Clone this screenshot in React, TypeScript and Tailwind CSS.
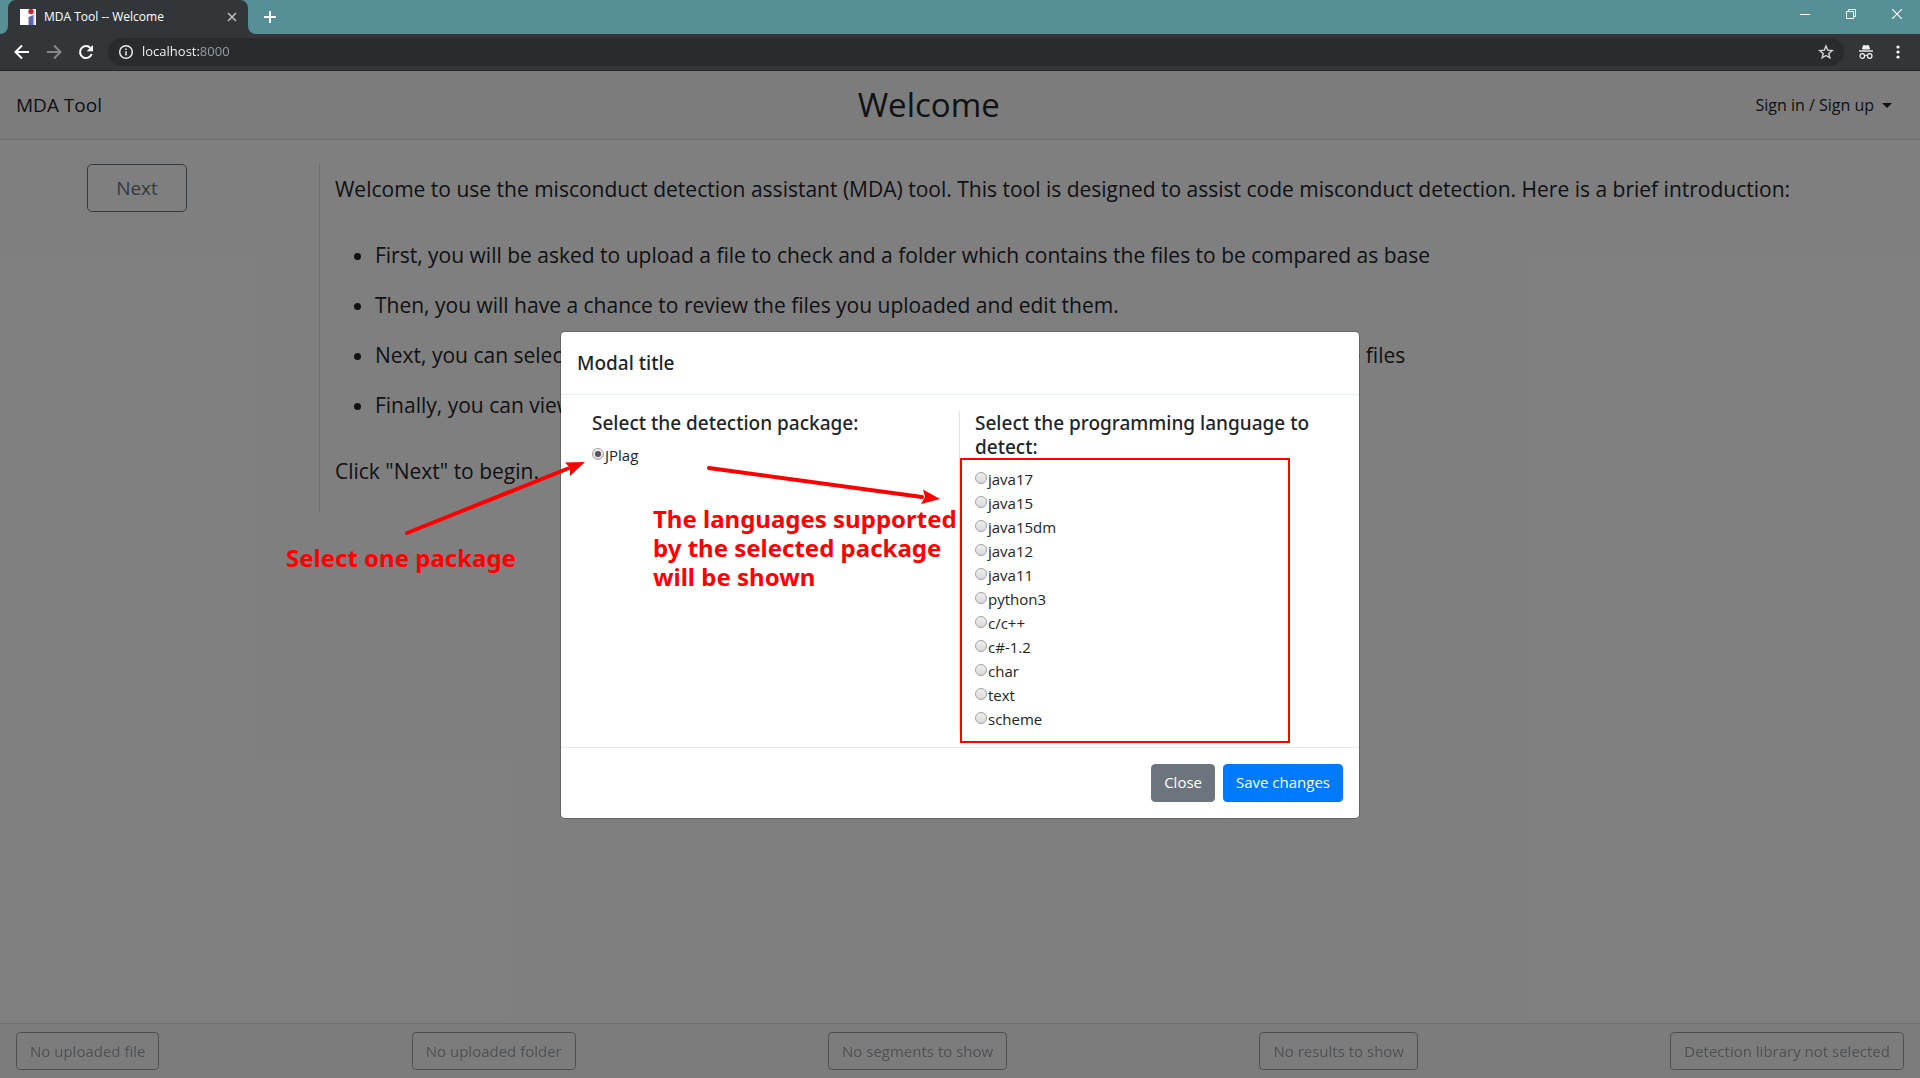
import React, { useState } from "react";

const languages = [
  "java17",
  "java15",
  "java15dm",
  "java12",
  "java11",
  "python3",
  "c/c++",
  "c#-1.2",
  "char",
  "text",
  "scheme",
];

const statuses = [
  "No uploaded file",
  "No uploaded folder",
  "No segments to show",
  "No results to show",
  "Detection library not selected",
];

function Favicon() {
  return (
    <svg width="16" height="16" viewBox="0 0 16 16" aria-hidden="true">
      <rect width="16" height="16" fill="#fff" />
      <circle cx="11" cy="2.5" r="2.7" fill="#cf2027" />
      <path d="M8.5 8 13.5 6V16H8.5Z" fill="#6467a5" />
      <path d="M14 0h1v16h-1z" fill="#d9d9ea" />
    </svg>
  );
}

function TabStrip() {
  return (
    <div className="flex h-[34px] items-stretch bg-[#578f97] text-white">
      <div className="flex w-2 bg-[#323639]">
        <div className="flex-1 rounded-br-lg bg-[#578f97]" />
      </div>
      <div className="flex w-60 items-center rounded-t-lg bg-[#323639] pr-2 pl-3">
        <Favicon />
        <span className="ml-2 flex-1 text-xs">MDA Tool -- Welcome</span>
        <button aria-label="Close tab" className="flex size-4 items-center justify-center">
          <svg width="10" height="10" viewBox="0 0 10 10" stroke="#bfc1c3" strokeWidth="1.5">
            <path d="M1 1 9 9M9 1 1 9" />
          </svg>
        </button>
      </div>
      <div className="flex w-2 bg-[#323639]">
        <div className="flex-1 rounded-bl-lg bg-[#578f97]" />
      </div>
      <button aria-label="New tab" className="flex w-7 items-center justify-center">
        <svg width="12" height="12" viewBox="0 0 12 12" stroke="#fff" strokeWidth="2">
          <path d="M6 0V12M0 6H12" />
        </svg>
      </button>
      <div className="ml-auto flex h-7 items-center">
        <button aria-label="Minimize" className="flex h-7 w-[46px] items-center justify-center">
          <svg width="10" height="10" viewBox="0 0 10 10" stroke="#fff">
            <path d="M0 5.5H10" />
          </svg>
        </button>
        <button aria-label="Restore" className="flex h-7 w-[46px] items-center justify-center">
          <svg width="10" height="10" viewBox="0 0 10 10" fill="none" stroke="#fff">
            <path d="M.5 2.5H7.5V9.5H.5ZM2.5 2.5V.5H9.5V7.5H7.5" />
          </svg>
        </button>
        <button aria-label="Close window" className="flex h-7 w-[46px] items-center justify-center">
          <svg width="10" height="10" viewBox="0 0 10 10" stroke="#fff" strokeWidth="1.1">
            <path d="M0 0 10 10M10 0 0 10" />
          </svg>
        </button>
      </div>
    </div>
  );
}

function Toolbar() {
  return (
    <div className="flex h-[37px] items-center border-b border-[#262626] bg-[#323639] text-white">
      <button aria-label="Back" className="ml-3 flex size-5 items-center justify-center">
        <svg width="20" height="20" viewBox="0 0 20 20" fill="none" stroke="#fff" strokeWidth="2">
          <path d="M17 10H4M10 3.5 3.5 10 10 16.5" />
        </svg>
      </button>
      <button aria-label="Forward" className="ml-3 flex size-5 items-center justify-center">
        <svg width="20" height="20" viewBox="0 0 20 20" fill="none" stroke="#85888a" strokeWidth="2">
          <path d="M3 10H16M10 3.5 16.5 10 10 16.5" />
        </svg>
      </button>
      <button aria-label="Reload" className="ml-3 flex size-5 items-center justify-center">
        <svg width="20" height="20" viewBox="0 0 20 20" fill="none">
          <path d="M14.5 6A6 6 0 1 0 15.7 12" stroke="#fff" strokeWidth="2" />
          <path d="M17 3V9.3H10.7Z" fill="#fff" />
        </svg>
      </button>
      <div className="ml-3 flex h-7 flex-1 items-center rounded-full bg-[#282c2f] px-2.5">
        <svg width="16" height="16" viewBox="0 0 16 16" fill="none" stroke="#e8eaed" strokeWidth="1.5">
          <circle cx="8" cy="8" r="6.3" />
          <path d="M8 7.2V11.5M8 4.5V6" />
        </svg>
        <input
          type="text"
          aria-label="Address"
          defaultValue="localhost:8000"
          className="ml-2 flex-1 bg-[linear-gradient(90deg,#ffffff_57px,#9aa0a6_57px)] bg-clip-text text-[13px] text-transparent outline-none"
        />
        <button aria-label="Bookmark this page">
          <svg width="16" height="16" viewBox="0 0 16 16" fill="none" stroke="#d5d7d9" strokeWidth="1.4">
            <path d="M8 2 9.7 6.1 14.2 6.5 10.8 9.4 11.8 13.8 8 11.5 4.2 13.8 5.2 9.4 1.8 6.5 6.3 6.1Z" />
          </svg>
        </button>
      </div>
      <button aria-label="Incognito" className="ml-3.5">
        <svg width="16" height="16" viewBox="0 0 16 16" fill="none" stroke="#f1f3f4">
          <path d="M4.5 5 5.5 1.5 8 2 10.5 1.5 11.5 5Z" fill="#f1f3f4" />
          <path d="M1 7H15" strokeWidth="1.4" />
          <circle cx="4.3" cy="12" r="2.3" strokeWidth="1.2" />
          <circle cx="11.7" cy="12" r="2.3" strokeWidth="1.2" />
          <path d="M6.6 11.6Q8 10.8 9.4 11.6" />
        </svg>
      </button>
      <button aria-label="Browser menu" className="mr-3.5 ml-4">
        <svg width="16" height="16" viewBox="0 0 16 16" fill="#fff">
          <circle cx="8" cy="3" r="1.6" />
          <circle cx="8" cy="8" r="1.6" />
          <circle cx="8" cy="13" r="1.6" />
        </svg>
      </button>
    </div>
  );
}

type RadioProps = { name: string; label: string; checked: boolean; onSelect: () => void };

function RadioRow({ name, label, checked, onSelect }: RadioProps) {
  return (
    <label className="flex h-6 items-center text-[15px]">
      <input
        type="radio"
        name={name}
        checked={checked}
        onChange={onSelect}
        className="mb-0.5 flex size-3 appearance-none items-center justify-center rounded-full border border-[#a3a3a3] bg-linear-to-b from-[#efefef] to-[#dadada] checked:before:size-1.5 checked:before:rounded-full checked:before:bg-[#555555]"
      />
      <span className="pt-0.5 pl-px">{label}</span>
    </label>
  );
}

function Annotations() {
  return (
    <div className="pointer-events-none absolute inset-0 font-['Noto_Sans',sans-serif] text-2xl leading-[29px] font-bold text-[#ff0000]">
      <p className="absolute top-[212px] left-[-274px] whitespace-nowrap">Select one package</p>
      <p className="absolute top-[173px] left-[93px] whitespace-nowrap">
        The languages supported
        <br />
        by the selected package
        <br />
        will be shown
      </p>
      <div className="absolute top-[127px] left-[400px] h-[285px] w-[330px] border-2 border-[#ff0000]" />
      <svg
        className="absolute top-px left-[-160px]"
        width="560"
        height="220"
        viewBox="0 0 560 220"
        fill="#ff0000"
        aria-hidden="true"
      >
        <path d="M7 201 168 136.500" stroke="#ff0000" strokeWidth="4" strokeLinecap="round" />
        <path d="M185 130 165 130.500 170 136 170 144Z" />
        <path d="M309 136 522 165" stroke="#ff0000" strokeWidth="4" strokeLinecap="round" />
        <path d="M540 167 523 157.500 525 165 521 172Z" />
      </svg>
    </div>
  );
}

function PackageDialog() {
  const [pkg, setPkg] = useState("JPlag");
  const [language, setLanguage] = useState("");
  return (
    <div className="absolute inset-0 flex items-center justify-center bg-black/50">
      <div className="relative w-full max-w-[800px]">
        <div
          role="dialog"
          aria-labelledby="dialog-title"
          className="rounded-[5px] border border-black/20 bg-white bg-clip-padding"
        >
          <div className="border-b border-[#e9ecef] p-4">
            <h5 id="dialog-title" className="font-['Noto_Sans',sans-serif] text-[19px] leading-[30px] font-medium">
              Modal title
            </h5>
          </div>
          <div className="grid grid-cols-2 p-4">
            <section className="px-[15px]">
              <h5 className="mb-2 font-['Noto_Sans',sans-serif] text-[19px] leading-6 font-medium">
                Select the detection package:
              </h5>
              <RadioRow name="package" label="JPlag" checked={pkg === "JPlag"} onSelect={() => setPkg("JPlag")} />
            </section>
            <section className="-ml-px border-l border-[#dee2e6] px-[15px]">
              <h5 className="mb-2 font-['Noto_Sans',sans-serif] text-[19px] leading-6 font-medium">
                Select the programming language to detect:
              </h5>
              {languages.map((item) => (
                <RadioRow
                  key={item}
                  name="language"
                  label={item}
                  checked={language === item}
                  onSelect={() => setLanguage(item)}
                />
              ))}
            </section>
          </div>
          <div className="flex justify-end gap-2 border-t border-[#e9ecef] p-4 text-[15px] text-white">
            <button className="h-[38px] rounded border border-[#6c757d] bg-[#6c757d] px-3">Close</button>
            <button className="h-[38px] rounded border border-[#007bff] bg-[#007bff] px-3">Save changes</button>
          </div>
        </div>
        <Annotations />
      </div>
    </div>
  );
}

export default function App() {
  return (
    <div className="flex min-h-screen flex-col bg-white font-['Open_Sans',sans-serif] text-[#212529]">
      <TabStrip />
      <Toolbar />
      <div className="relative flex flex-1 flex-col">
        <header className="flex h-[69px] items-center justify-between border-b border-[#dee2e6] bg-[#f8f9fa] px-4">
          <a href="#home" className="text-[19px]">
            MDA Tool
          </a>
          <h1 className="text-[33px]">Welcome</h1>
          <button className="mr-3 flex items-center gap-2 text-base">
            Sign in / Sign up
            <svg width="10" height="5" viewBox="0 0 10 5" fill="currentColor" aria-hidden="true">
              <path d="M0 0H10L5 5Z" />
            </svg>
          </button>
        </header>
        <main className="mt-6 flex flex-1 items-start">
          <div className="flex w-1/6 justify-center pr-[46px]">
            <button className="h-12 w-[100px] rounded-[5px] border border-[#6c757d] text-[19px] text-[#6c757d]">
              Next
            </button>
          </div>
          <div className="-ml-px flex-1 border-l border-[#dee2e6] px-[15px] text-[21px] leading-[50px]">
            <p className="mb-4">
              Welcome to use the misconduct detection assistant (MDA) tool. This tool is designed to assist code
              misconduct detection. Here is a brief introduction:
            </p>
            <ul className="mb-4 list-disc pl-10">
              <li>First, you will be asked to upload a file to check and a folder which contains the files to be compared as base</li>
              <li>Then, you will have a chance to review the files you uploaded and edit them.</li>
              <li>Next, you can select the detection package and set its parameters that are used to compare all of the files</li>
              <li>Finally, you can view the results.</li>
            </ul>
            <p className="mb-4">Click "Next" to begin.</p>
          </div>
        </main>
        <footer className="flex h-[55px] items-center justify-between border-t border-[#dee2e6] bg-[#f8f9fa] px-4">
          {statuses.map((status) => (
            <button
              key={status}
              disabled
              className="h-[38px] rounded border border-[#6c757d] px-[13px] text-[15px] text-[#6c757d] opacity-65"
            >
              {status}
            </button>
          ))}
        </footer>
        <PackageDialog />
      </div>
    </div>
  );
}
